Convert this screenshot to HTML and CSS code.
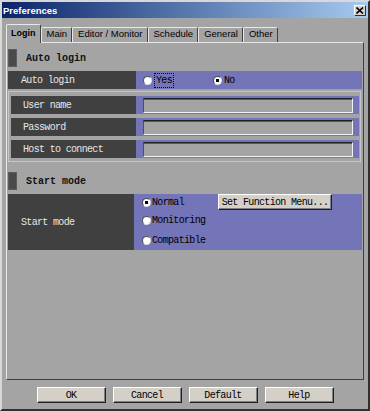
FILE: index.html
```html
<!DOCTYPE html>
<html lang="en">
<head>
    <meta charset="UTF-8">
    <title>Preferences</title>
    <link rel="stylesheet" href="styles.css">
</head>
<body>
    <div class="window">
        <div class="titlebar">
            <span class="title">Preferences</span>
            <span class="close">
                <svg width="8" height="7" viewBox="0 0 8 7"><path d="M0.5 0.5 L7 6.5 M7 0.5 L0.5 6.5" stroke="#000" stroke-width="1.6"/></svg>
            </span>
        </div>

        <div class="tabs">
            <div class="tab active">Login</div>
            <div class="tab">Main</div>
            <div class="tab">Editor / Monitor</div>
            <div class="tab">Schedule</div>
            <div class="tab">General</div>
            <div class="tab">Other</div>
        </div>

        <div class="panel">
            <div class="section"><span class="marker"></span><span class="section-title">Auto login</span></div>
            <div class="row">
                <div class="label">Auto login</div>
                <div class="value">
                    <label class="radio wide"><span class="dot"></span><span class="focus">Yes</span></label>
                    <label class="radio"><span class="dot checked"></span>No</label>
                </div>
            </div>

            <div class="group">
                <div class="row">
                    <div class="label">User name</div>
                    <div class="value"><span class="field"></span></div>
                </div>
                <div class="row">
                    <div class="label">Password</div>
                    <div class="value"><span class="field"></span></div>
                </div>
                <div class="row">
                    <div class="label">Host to connect</div>
                    <div class="value"><span class="field"></span></div>
                </div>
            </div>

            <div class="section spaced"><span class="marker"></span><span class="section-title">Start mode</span></div>
            <div class="row tall">
                <div class="label narrow">Start mode</div>
                <div class="value modes">
                    <div class="mode first">
                        <label class="radio option"><span class="dot checked"></span>Normal</label>
                        <button class="btn menu">Set Function Menu...</button>
                    </div>
                    <div class="mode">
                        <label class="radio option"><span class="dot"></span>Monitoring</label>
                    </div>
                    <div class="mode">
                        <label class="radio option"><span class="dot"></span>Compatible</label>
                    </div>
                </div>
            </div>
        </div>

        <div class="buttons">
            <button class="btn">OK</button>
            <button class="btn">Cancel</button>
            <button class="btn">Default</button>
            <button class="btn">Help</button>
        </div>
    </div>
</body>
</html>
```

FILE: styles.css
```css
body {
    margin: 0;
    font-family: "Liberation Mono", monospace;
}
.window {
    width: 370px;
    height: 411px;
    box-sizing: border-box;
    background-color: #a4a4a4;
    border: 2px solid;
    border-color: #d8d8d8 #303030 #303030 #d8d8d8;
}
.titlebar {
    height: 16px;
    display: flex;
    align-items: center;
    justify-content: space-between;
    padding: 0 2px 0 1px;
    background: linear-gradient(to right, #0a246a, #a6caf0);
}
.title {
    color: #fff;
    font: bold 9.5px "Liberation Sans", sans-serif;
}
.close {
    width: 12px;
    height: 11px;
    box-sizing: border-box;
    display: flex;
    align-items: center;
    justify-content: center;
    background-color: #d4d0c8;
    border: 1px solid;
    border-color: #fff #303030 #303030 #fff;
}

/* tabs */
.tabs {
    display: flex;
    align-items: flex-end;
    height: 18px;
    margin-top: 6px;
    padding-left: 4px;
}
.tab {
    height: 14px;
    line-height: 14px;
    padding: 0 4px 0 5px;
    border: 1px solid;
    border-bottom: none;
    border-color: #e8e8e8 #404040 #404040 #e8e8e8;
    border-radius: 2px 2px 0 0;
    font: 9.5px "Liberation Sans", sans-serif;
    color: #000;
}
.tab.active {
    height: 18px;
    line-height: 17px;
    padding: 0 4px;
    margin-bottom: -1px;
    position: relative;
    background-color: #a4a4a4;
    font-weight: bold;
    font-size: 9px;
}

/* panel */
.panel {
    height: 338px;
    margin: 0 4px;
    padding: 0 1px;
    box-sizing: border-box;
    border: 1px solid;
    border-color: #e8e8e8 #404040 #404040 #e8e8e8;
}
.section {
    display: flex;
    align-items: center;
    height: 18px;
    margin-top: 6px;
}
.section.spaced {
    margin-top: 10px;
}
.marker {
    width: 9px;
    height: 18px;
    box-sizing: border-box;
    background-color: #4a4a4a;
    border: 1px solid #5c5c5c;
}
.section-title {
    margin-left: 9px;
    font-size: 10px;
    font-weight: bold;
    color: #111;
}
.row {
    display: flex;
    height: 18px;
    margin-top: 4px;
}
.label {
    width: 128px;
    box-sizing: border-box;
    padding-left: 13px;
    display: flex;
    align-items: center;
    background-color: #404040;
    color: #e6e6e6;
    font-size: 10px;
    letter-spacing: -0.67px;
}
.label.narrow {
    width: 126px;
}
.value {
    flex: 1;
    display: flex;
    align-items: center;
    padding-left: 7px;
    background-color: #7474b8;
    font-size: 10px;
    letter-spacing: -0.67px;
    color: #000;
}

/* login fields */
.group {
    margin: 2px 1px 0 0;
    padding: 0 1px 3px 2px;
    border: 1px solid #c6c6c6;
}
.group .label {
    width: 125px;
    padding-left: 12px;
}
.field {
    flex: 1;
    height: 15px;
    margin-right: 6px;
    box-sizing: border-box;
    background-color: #a4a4a4;
    border: 1px solid;
    border-color: #202020 #f2f2f2 #f2f2f2 #505050;
    box-shadow: inset 0 1px #5a5a5a;
}

/* radios */
.radio {
    display: flex;
    align-items: center;
    gap: 2px;
}
.radio.wide {
    width: 70px;
}
.dot {
    width: 9px;
    height: 9px;
    box-sizing: border-box;
    border-radius: 50%;
    background-color: #fff;
    border: 1px solid;
    border-color: #505050 #e0e0e0 #e0e0e0 #505050;
}
.dot.checked {
    background: radial-gradient(circle, #000 0 1.6px, #fff 2px);
}
.focus {
    padding: 1px;
    border: 1px dotted #000;
}

/* start mode */
.row.tall {
    height: 56px;
}
.modes {
    flex-direction: column;
    align-items: stretch;
    padding-left: 8px;
}
.mode {
    display: flex;
    align-items: center;
    height: 20px;
}
.mode.first {
    height: 16px;
}
.option {
    width: 76px;
    gap: 1px;
}

/* buttons */
.btn {
    height: 16px;
    padding: 0;
    box-sizing: border-box;
    background-color: #d4d0c8;
    border: 1px solid;
    border-color: #fff #202020 #202020 #fff;
    box-shadow: inset -1px -1px #808080;
    font-family: "Liberation Mono", monospace;
    font-size: 10px;
    letter-spacing: -0.67px;
    color: #000;
}
.btn.menu {
    width: 114px;
}
.buttons {
    display: flex;
    justify-content: center;
    gap: 7px;
    margin-top: 7px;
}
.buttons .btn {
    width: 69px;
}
```
